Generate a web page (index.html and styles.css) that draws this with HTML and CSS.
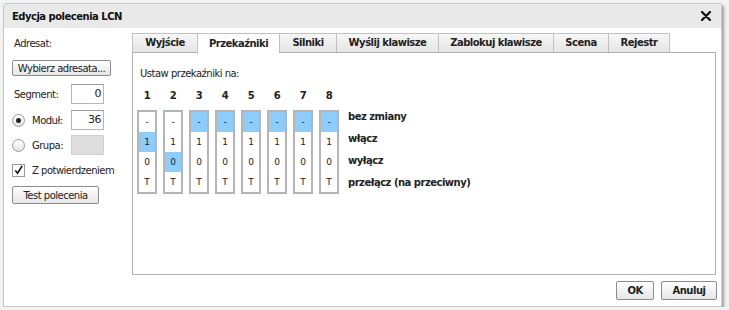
FILE: index.html
```html
<!DOCTYPE html>
<html lang="pl">
<head>
    <meta charset="UTF-8">
    <title>Edycja polecenia LCN</title>
    <link rel="stylesheet" href="styles.css">
</head>
<body>

<div class="dialog">
    <div class="dialog-header">
        <span class="dialog-title">Edycja polecenia LCN</span>
        <span class="dialog-close">
            <svg width="10" height="10" viewBox="0 0 10 10"><path d="M1 1 L9 9 M9 1 L1 9" stroke="#111" stroke-width="2.4" stroke-linecap="round"/></svg>
        </span>
    </div>

    <div class="dialog-body">
        <div class="sidebar">
            <div class="side-label">Adresat:</div>
            <button class="btn btn-address">Wybierz adresata...</button>

            <div class="field field-segment">
                <span class="field-label">Segment:</span>
                <span class="text-input">0</span>
            </div>
            <div class="field field-module">
                <span class="radio checked"></span>
                <span class="field-label">Moduł:</span>
                <span class="text-input">36</span>
            </div>
            <div class="field field-group">
                <span class="radio"></span>
                <span class="field-label">Grupa:</span>
                <span class="text-input disabled"></span>
            </div>
            <div class="check-row">
                <span class="checkbox">
                    <svg width="12" height="12" viewBox="0 0 12 12"><path d="M2.5 6.5 L5 9.5 L10 1.5" stroke="#111" stroke-width="1.8" fill="none"/></svg>
                </span>
                <span>Z potwierdzeniem</span>
            </div>
            <button class="btn btn-test">Test polecenia</button>
        </div>

        <div class="tabs">
            <div class="tab-bar">
                <div class="tab t-out">Wyjście</div>
                <div class="tab t-relay active">Przekaźniki</div>
                <div class="tab t-motor">Silniki</div>
                <div class="tab t-send">Wyślij klawisze</div>
                <div class="tab t-lock">Zablokuj klawisze</div>
                <div class="tab t-scene">Scena</div>
                <div class="tab t-reg">Rejestr</div>
            </div>
            <div class="tab-panel">
                <div class="panel-caption">Ustaw przekaźniki na:</div>
                <div class="relays" id="relays">
                    <div class="relay-legend">
                        <div>bez zmiany</div>
                        <div>włącz</div>
                        <div>wyłącz</div>
                        <div>przełącz (na przeciwny)</div>
                    </div>
                </div>
            </div>
        </div>
    </div>

    <div class="dialog-footer">
        <button class="btn btn-ok">OK</button>
        <button class="btn btn-cancel">Anuluj</button>
    </div>
</div>

<script>
    // state of each relay: 0 = bez zmiany, 1 = włącz, 2 = wyłącz, 3 = przełącz
    const relayState = [1, 2, 0, 0, 0, 0, 0, 0];
    const options = ['-', '1', '0', 'T'];
    const container = document.getElementById('relays');
    const legend = container.querySelector('.relay-legend');

    relayState.forEach(function (state, i) {
        const relay = document.createElement('div');
        relay.className = 'relay';

        const num = document.createElement('div');
        num.className = 'relay-num';
        num.textContent = i + 1;
        relay.appendChild(num);

        const box = document.createElement('div');
        box.className = 'relay-box';
        options.forEach(function (label, j) {
            const opt = document.createElement('div');
            opt.className = 'opt' + (j === state ? ' selected' : '');
            opt.textContent = label;
            box.appendChild(opt);
        });
        relay.appendChild(box);

        container.insertBefore(relay, legend);
    });
</script>

</body>
</html>
```

FILE: styles.css
```css
body {
    margin: 0;
    background-color: #f2f2f2;
    font-family: "DejaVu Sans", Verdana, sans-serif;
    font-size: 10px;
    letter-spacing: -0.5px;
    color: #222;
}
.dialog {
    margin: 3px 0 0 3px;
    width: 717px;
    height: 302px;
    background-color: #fff;
    border: 1px solid #c8c8c8;
    border-radius: 3px 3px 0 0;
    box-shadow: 2px 2px 3px rgba(0, 0, 0, 0.35);
    display: flex;
    flex-direction: column;
}
.dialog-header {
    height: 24px;
    flex-shrink: 0;
    background-color: #e9e9e9;
    display: flex;
    align-items: center;
    justify-content: space-between;
    padding: 0 10px 0 8px;
}
.dialog-title {
    font-weight: bold;
    font-size: 10px;
    color: #111;
}
.dialog-close {
    display: flex;
}
.dialog-body {
    display: flex;
    padding: 5px 5px 0 8px;
}
.sidebar {
    width: 120px;
    flex-shrink: 0;
}
.side-label {
    margin: 4px 0 0 2px;
    line-height: 14px;
}
.btn {
    font-family: "DejaVu Sans", Verdana, sans-serif;
    font-size: 10px;
    letter-spacing: -0.5px;
    color: #222;
    background: linear-gradient(#ffffff, #e6e6e6);
    border: 1px solid #8c8c8c;
    border-radius: 2px;
    padding: 0;
    display: block;
}
.btn-address {
    margin-top: 9px;
    width: 99px;
    height: 16px;
}
.btn-test {
    margin-top: 8px;
    width: 87px;
    height: 18px;
}
.field {
    display: flex;
    align-items: center;
    height: 20px;
    margin-top: 6px;
}
.field-segment {
    margin-top: 8px;
    padding-left: 2px;
}
.field-group {
    margin-top: 5px;
}
.field-label {
    flex: 1;
}
.text-input {
    width: 29px;
    height: 18px;
    border: 1px solid #b5b5b5;
    border-top-color: #999;
    text-align: right;
    line-height: 18px;
    padding-right: 2px;
    font-size: 11px;
    margin-right: 28px;
}
.text-input.disabled {
    background-color: #dedede;
    border-color: #cfcfcf;
}
.radio {
    width: 11px;
    height: 11px;
    border: 1px solid #9a9a9a;
    border-radius: 50%;
    background: linear-gradient(#ffffff, #e4e4e4);
    margin: 0 7px 0 0;
    position: relative;
}
.radio.checked::after {
    content: "";
    position: absolute;
    width: 5px;
    height: 5px;
    border-radius: 50%;
    background-color: #222;
    left: 3px;
    top: 3px;
}
.check-row {
    display: flex;
    align-items: center;
    margin-top: 7px;
    height: 16px;
}
.checkbox {
    width: 11px;
    height: 11px;
    border: 1px solid #9a9a9a;
    background-color: #fff;
    margin-right: 7px;
    display: flex;
    align-items: flex-end;
    justify-content: center;
}
.tabs {
    flex: 1;
    display: flex;
    flex-direction: column;
}
.tab-bar {
    display: flex;
    height: 19px;
}
.tab {
    height: 18px;
    line-height: 18px;
    border: 1px solid #c2c2c2;
    border-bottom: none;
    border-right: none;
    background: linear-gradient(#f7f7f7, #e5e5e5);
    font-weight: bold;
    text-align: center;
    color: #222;
}
.tab:nth-child(7) {
    border-right: 1px solid #c2c2c2;
}
.tab.active {
    background: #fff;
    height: 20px;
    margin-bottom: -1px;
    position: relative;
    line-height: 20px;
}
.t-out { width: 64px; }
.t-relay { width: 81px; }
.t-motor { width: 56px; }
.t-send { width: 101px; }
.t-lock { width: 114px; }
.t-scene { width: 54px; }
.t-reg { width: 60px; }
.tab-panel {
    box-sizing: border-box;
    height: 223px;
    border: 1px solid #b0b0b0;
    padding: 14px 0 0 7px;
}
.panel-caption {
    line-height: 14px;
}
.relays {
    display: flex;
    gap: 6px;
    margin: 8px 0 0 -3px;
}
.relay {
    width: 20px;
    display: flex;
    flex-direction: column;
}
.relay-num {
    height: 14px;
    line-height: 14px;
    text-align: center;
    font-weight: bold;
    margin-bottom: 7px;
}
.relay-box {
    border: 2px solid #b5b5b5;
    background-color: #fff;
}
.opt {
    height: 20px;
    line-height: 20px;
    text-align: center;
    font-size: 9px;
    letter-spacing: 0;
}
.opt.selected {
    background-color: #8ccdfb;
}
.relay-legend {
    margin: 17px 0 0 3px;
    font-weight: bold;
}
.relay-legend div {
    height: 22px;
    line-height: 22px;
}
.dialog-footer {
    display: flex;
    justify-content: flex-end;
    gap: 7px;
    padding: 6px 4px 0 0;
}
.btn-ok {
    width: 38px;
    height: 19px;
    font-weight: bold;
}
.btn-cancel {
    width: 56px;
    height: 19px;
    font-weight: bold;
}
```
